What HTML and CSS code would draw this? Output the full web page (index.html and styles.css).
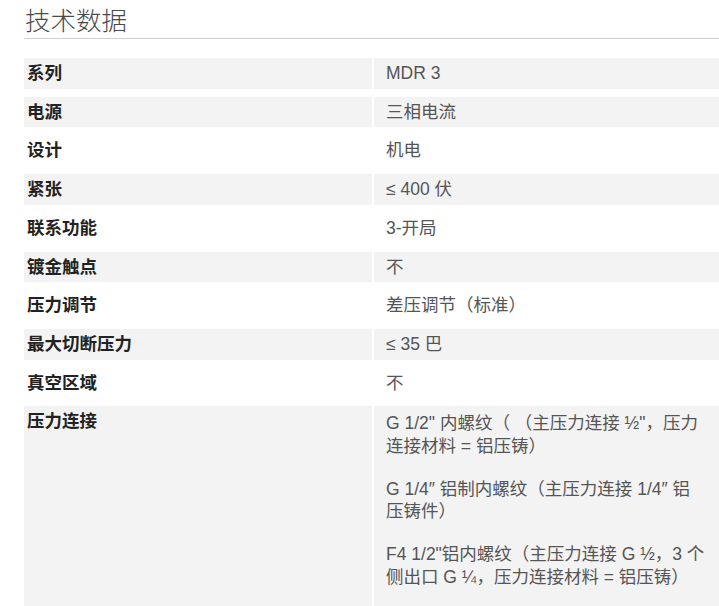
FILE: index.html
```html
<!DOCTYPE html>
<html lang="zh-CN">
<head>
<meta charset="utf-8">
<title>技术数据</title>
<link rel="stylesheet" href="styles.css">
</head>
<body>
<section class="tech">
  <h2 class="tech-title">技术数据</h2>
  <div class="specs">
    <div class="spec-row shaded"><div class="spec-label">系列</div><div class="spec-value">MDR 3</div></div>
    <div class="spec-row shaded"><div class="spec-label">电源</div><div class="spec-value">三相电流</div></div>
    <div class="spec-row"><div class="spec-label">设计</div><div class="spec-value">机电</div></div>
    <div class="spec-row shaded"><div class="spec-label">紧张</div><div class="spec-value">≤ 400 伏</div></div>
    <div class="spec-row"><div class="spec-label">联系功能</div><div class="spec-value">3-开局</div></div>
    <div class="spec-row shaded"><div class="spec-label">镀金触点</div><div class="spec-value">不</div></div>
    <div class="spec-row"><div class="spec-label">压力调节</div><div class="spec-value">差压调节（标准）</div></div>
    <div class="spec-row shaded"><div class="spec-label">最大切断压力</div><div class="spec-value">≤ 35 巴</div></div>
    <div class="spec-row"><div class="spec-label">真空区域</div><div class="spec-value">不</div></div>
    <div class="spec-row shaded"><div class="spec-label">压力连接</div><div class="spec-value multi">
      <p>G 1/2" 内螺纹（ （主压力连接 ½"，压力连接材料 = 铝压铸）</p>
      <p>G 1/4″ 铝制内螺纹（主压力连接 1/4″ 铝压铸件）</p>
      <p>F4 1/2"铝内螺纹（主压力连接 G ½，3 个侧出口 G ¼，压力连接材料 = 铝压铸）</p>
    </div></div>
  </div>
</section>
</body>
</html>
```

FILE: styles.css
```css
html { overflow: hidden; }
body {
  margin: 0;
  background: #fff;
  font-family: "Liberation Sans", "Noto Sans CJK SC", sans-serif;
  color: #444;
}
.tech {
  padding-left: 24px;
}
.tech-title {
  margin: 0;
  padding-top: 4px;
  font-size: 25.5px;
  line-height: 34px;
  font-weight: 300;
  color: #4a4a4a;
  border-bottom: 1px solid #cfcfcf;
  padding-left: 1px;
}
.specs {
  margin-top: 19px;
  display: flex;
  flex-direction: column;
  gap: 8px;
}
.spec-row {
  display: grid;
  grid-template-columns: 348px 1fr;
  column-gap: 2px;
}
.spec-row.shaded .spec-label,
.spec-row.shaded .spec-value {
  background: #f3f3f3;
}
.spec-label {
  padding: 4px 3px;
  font-size: 17.5px;
  line-height: 22.7px;
  font-weight: 700;
  color: #222;
}
.spec-value {
  padding: 4px 12px;
  font-size: 17.5px;
  line-height: 22.7px;
  color: #555;
}
.spec-value.multi {
  padding-top: 6px;
}
.spec-value p {
  margin: 0 0 20px;
}
```
